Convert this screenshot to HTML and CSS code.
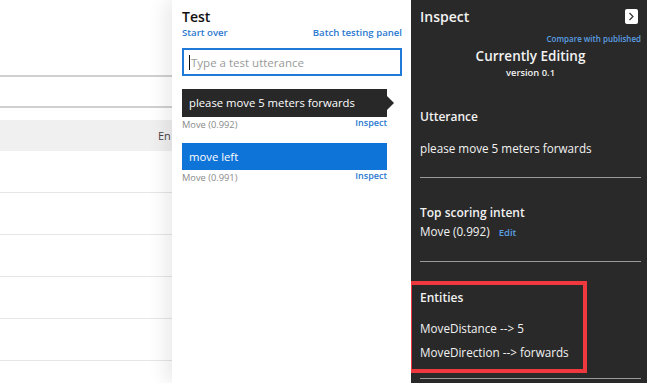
FILE: index.html
```html
<!DOCTYPE html>
<html lang="en">
  <head>
    <meta charset="UTF-8" />
    <title>Test and Inspect</title>
    <link rel="stylesheet" href="styles.css">
  </head>
  <body>
    <div class="page">
      <div class="list-area">
        <div class="rule first"></div>
        <div class="rule second"></div>
        <div class="table-head">En</div>
        <div class="table-row"></div>
        <div class="table-row"></div>
        <div class="table-row"></div>
        <div class="table-row"></div>
        <div class="table-row"></div>
      </div>

      <div class="test-panel">
        <h2>Test</h2>
        <div class="link-row">
          <a href="#">Start over</a>
          <a href="#">Batch testing panel</a>
        </div>
        <div class="utterance-input">
          <span class="caret"></span>
          <span class="placeholder">Type a test utterance</span>
        </div>

        <div class="bubble selected">please move 5 meters forwards</div>
        <div class="meta">
          <span>Move (0.992)</span>
          <a href="#">Inspect</a>
        </div>

        <div class="bubble latest">move left</div>
        <div class="meta">
          <span>Move (0.991)</span>
          <a href="#">Inspect</a>
        </div>
      </div>

      <div class="inspect-panel">
        <div class="inspect-head">
          <h2>Inspect</h2>
          <span class="collapse-btn">
            <svg width="7" height="9" viewBox="0 0 7 9">
              <path d="M1.5 1 L5 4.5 L1.5 8" fill="none" stroke="#333" stroke-width="1.2" />
            </svg>
          </span>
        </div>
        <div class="compare"><a href="#">Compare with published</a></div>
        <div class="editing">Currently Editing</div>
        <div class="version">version 0.1</div>

        <div class="section utterance">
          <h3>Utterance</h3>
          <p>please move 5 meters forwards</p>
        </div>
        <div class="divider"></div>

        <div class="section intent">
          <h3>Top scoring intent</h3>
          <p>Move (0.992) <a href="#">Edit</a></p>
        </div>
        <div class="divider"></div>

        <div class="section entities">
          <h3>Entities</h3>
          <p>MoveDistance --&gt; 5</p>
          <p>MoveDirection --&gt; forwards</p>
        </div>
        <div class="divider last"></div>
      </div>
    </div>
  </body>
</html>
```

FILE: styles.css
```css
body {
  margin: 0;
  font-family: "Open Sans", "Noto Sans", sans-serif;
  background-color: white;
  overflow: hidden;
}

a {
  text-decoration: none;
}

.page {
  display: flex;
  height: 383px;
}

/* list behind the panels */

.list-area {
  width: 172px;
  flex-shrink: 0;
  overflow: hidden;
}

.rule {
  height: 2px;
  background-color: #d0d0d0;
}

.rule.first {
  margin-top: 75px;
}

.rule.second {
  margin-top: 29px;
}

.table-head {
  margin-top: 12px;
  height: 31px;
  line-height: 31px;
  background-color: #f0f0f0;
  padding-left: 158px;
  font-size: 11px;
  color: #4a3f44;
  white-space: nowrap;
}

.table-row {
  height: 41px;
  border-bottom: 1px solid #e6e6e6;
}

/* test panel */

.test-panel {
  width: 239px;
  flex-shrink: 0;
  box-sizing: border-box;
  padding: 8px 9px 0 10px;
  background-color: white;
  box-shadow: -6px 0 18px rgba(0, 0, 0, 0.09);
  position: relative;
}

.test-panel h2 {
  margin: 0;
  font-size: 14px;
  line-height: 18px;
  font-weight: 600;
  color: #111;
}

.link-row {
  display: flex;
  justify-content: space-between;
  font-size: 9.6px;
  line-height: 14px;
  font-weight: 600;
}

.link-row a {
  color: #2b79d0;
}

.utterance-input {
  margin-top: 8px;
  height: 28px;
  box-sizing: border-box;
  border: 2px solid #1e7ad6;
  display: flex;
  align-items: center;
  padding-left: 5px;
}

.caret {
  width: 1px;
  height: 15px;
  background-color: #111;
  margin-right: 1px;
}

.placeholder {
  font-size: 11.5px;
  color: #9a9a9a;
}

.bubble {
  width: 205px;
  height: 28px;
  box-sizing: border-box;
  padding-left: 7px;
  line-height: 28px;
  font-size: 11.3px;
  color: white;
  position: relative;
}

.bubble.selected {
  margin-top: 13px;
  background-color: #282828;
}

.bubble.selected::after {
  content: "";
  position: absolute;
  right: -7px;
  top: 7px;
  border-left: 7px solid #282828;
  border-top: 7px solid transparent;
  border-bottom: 7px solid transparent;
}

.bubble.latest {
  margin-top: 12px;
  height: 27px;
  line-height: 27px;
  background-color: #0f74d8;
}

.meta {
  width: 205px;
  display: flex;
  justify-content: space-between;
  font-size: 9.3px;
  line-height: 13px;
  color: #8a8a8a;
  margin-top: 1px;
}

.meta a {
  color: #2b79d0;
  font-size: 9px;
  font-weight: 600;
  position: relative;
  top: -2px;
}

/* inspect panel */

.inspect-panel {
  flex: 1;
  background-color: #292929;
  color: #f2f2f2;
  padding: 8px 6px 0 9px;
}

.inspect-head {
  display: flex;
  justify-content: space-between;
  align-items: flex-start;
}

.inspect-panel h2 {
  margin: 0;
  font-size: 14px;
  line-height: 18px;
  font-weight: 600;
}

.collapse-btn {
  margin-top: 1px;
  margin-right: 3px;
  width: 13px;
  height: 15px;
  background-color: white;
  border-radius: 2px;
  display: flex;
  align-items: center;
  justify-content: center;
}

.compare {
  margin-top: 6px;
  text-align: right;
  font-size: 8px;
  line-height: 14px;
  font-weight: 600;
}

.compare a {
  color: #5b9fe3;
}

.editing {
  text-align: center;
  font-size: 13.5px;
  line-height: 20px;
  font-weight: 600;
}

.version {
  text-align: center;
  font-size: 9.4px;
  line-height: 14px;
  font-weight: 600;
}

.section h3 {
  margin: 0;
  font-size: 12px;
  line-height: 18px;
  font-weight: 600;
}

.section p {
  margin: 0;
  font-size: 11.7px;
  line-height: 18px;
}

.utterance {
  margin-top: 28px;
}

.utterance p {
  margin-top: 13px;
}

.divider {
  margin-top: 20px;
  width: 221px;
  height: 1px;
  background-color: #9a9a9a;
}

.intent {
  margin-top: 26px;
}

.intent a {
  margin-left: 6px;
  font-size: 9.5px;
  font-weight: 600;
  color: #5b9fe3;
}

.intent + .divider {
  margin-top: 19px;
}

.entities {
  margin: 19px 0 0 -12px;
  width: 179px;
  height: 92px;
  box-sizing: border-box;
  border: 4px solid #f0393f;
  padding: 4px 0 0 8px;
}

.entities p {
  margin-top: 6px;
}

.entities h3 + p {
  margin-top: 12px;
}

.divider.last {
  margin-top: 5px;
}
```
